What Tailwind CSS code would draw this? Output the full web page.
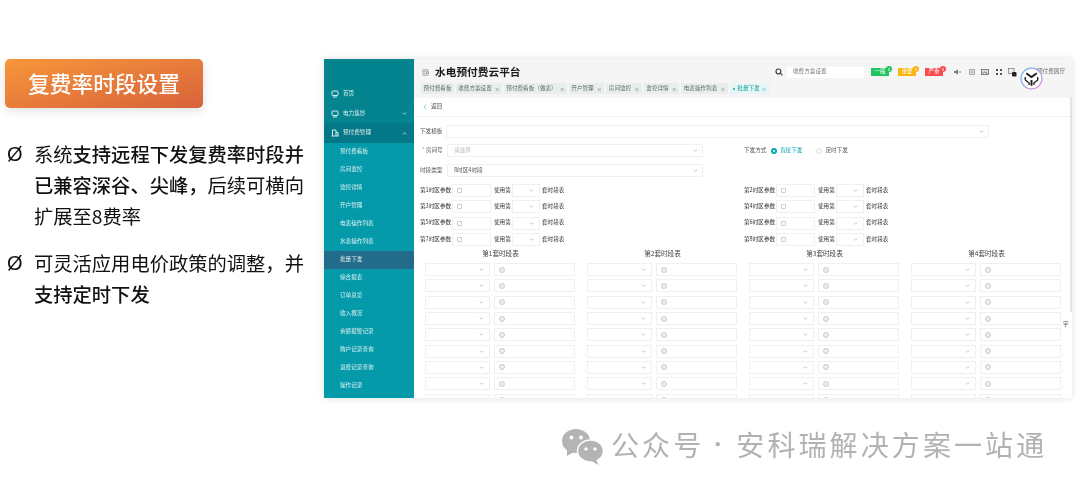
<!DOCTYPE html>
<html lang="zh-CN">
<head>
    <meta charset="UTF-8">
    <title>复费率时段设置</title>
    <script src="https://cdn.jsdelivr.net/npm/@tailwindcss/browser@4"></script>
</head>
<body class="bg-white">
<div class="w-[1080px] h-[489px] overflow-hidden flex flex-col bg-white font-['Noto_Sans_CJK_SC',sans-serif]">
    <div class="flex h-[421px] shrink-0">
        <!-- Left text -->
        <div class="w-[324px] shrink-0 pl-[5px] pt-[59px]">
            <div class="w-[198px] h-[49px] rounded-[5px] bg-gradient-to-br from-[#f7963a] to-[#d8623a] shadow-[0_3px_10px_rgba(0,0,0,0.12)] flex items-center justify-center text-white text-[21.7px] font-medium blur-[0.3px]">复费率时段设置</div>
            <div class="mt-[31px] flex text-[#111] text-[19.3px] leading-[31px] blur-[0.25px]">
                <span class="w-[29px] pl-[2px] shrink-0 text-[20px] font-['Liberation_Sans']">Ø</span>
                <p class="w-[275px]">系统<b class="font-medium">支持远程下发复费率时段并<br>已兼容深谷、尖峰，</b>后续可横向<br>扩展至8费率</p>
            </div>
            <div class="mt-[16px] flex text-[#111] text-[19.3px] leading-[31px] blur-[0.25px]">
                <span class="w-[29px] pl-[2px] shrink-0 text-[20px] font-['Liberation_Sans']">Ø</span>
                <p class="w-[275px]">可灵活应用电价政策的调整，并<br><b class="font-medium">支持定时下发</b></p>
            </div>
        </div>

        <!-- Screenshot card -->
        <div class="mt-[59px] w-[748px] h-[339px] relative flex shadow-[0_0_7px_rgba(0,0,0,0.13)] blur-[0.6px] text-[5.6px] text-[#555] leading-none">
            <aside class="w-[90px] shrink-0 bg-[#059aa9] text-white/85 overflow-hidden">
                <div class="h-[45px] bg-[#04848f] flex flex-col justify-end">
                    <div class="h-[20px] flex items-center pl-[7px] gap-[4px]">
                        <svg class="w-[8px] h-[8px]" viewBox="0 0 8 8" fill="none" stroke="#d8eef0"><rect x="1" y="1" width="6" height="4.5" rx="1"/><path d="M2 7h4"/></svg>首页
                    </div>
                </div>
                <div class="h-[19px] bg-[#04848f] flex items-center pl-[7px] gap-[4px]">
                    <svg class="w-[8px] h-[8px]" viewBox="0 0 8 8" fill="none" stroke="#d8eef0"><rect x="1" y="1" width="6" height="4.5" rx="1"/><path d="M2 7h4"/></svg>电力集抄
                    <svg class="ml-auto mr-[7px] w-[5px] h-[5px]" viewBox="0 0 6 6" fill="none" stroke="#bfe3e6"><path d="M1 2l2 2 2-2"/></svg>
                </div>
                <div class="h-[20px] bg-[#047886] flex items-center pl-[7px] gap-[4px]">
                    <svg class="w-[8px] h-[8px]" viewBox="0 0 8 8" fill="none" stroke="#d8eef0"><path d="M1.5 7V1h3.5v6M5 3.5h2V7M0.5 7h7"/></svg>预付费管理
                    <svg class="ml-auto mr-[7px] w-[5px] h-[5px]" viewBox="0 0 6 6" fill="none" stroke="#bfe3e6"><path d="M1 4l2-2 2 2"/></svg>
                </div>
                <div id="menu"></div>
            </aside>

            <main class="flex-1 min-w-0 bg-white flex flex-col overflow-hidden">
                <header class="h-[39px] shrink-0 bg-[#f5f5f5] px-[7px]">
                    <div class="h-[24px] flex items-center">
                        <svg class="w-[7px] h-[7px] ml-[1px] mr-[6px] mt-[2px]" viewBox="0 0 8 8" fill="none" stroke="#777" stroke-width="0.8"><path d="M0.5 1h7M0.5 3h3M0.5 5h3M0.5 7h7M5 3h2.5v2H5z"/></svg>
                        <span class="text-[10.7px] font-bold text-[#1a1a1a] mt-[2px]">水电预付费云平台</span>
                        <svg class="ml-auto w-[8px] h-[8px] mt-[2px] mr-[4px]" viewBox="0 0 8 8" fill="none" stroke="#444" stroke-width="1.2"><circle cx="3.4" cy="3.4" r="2.4"/><path d="M5.2 5.2L7.4 7.4"/></svg>
                        <div class="w-[77px] h-[11px] mt-[2px] bg-white flex items-center pl-[6px] text-[#777]">收费方案设置</div>
                        <div id="badges" class="flex ml-[7px] mt-[2px] gap-[9px]"></div>
                        <div class="flex items-center mt-[2px] ml-[10px] text-[#666]">
                            <svg class="w-[8px] h-[6px]" viewBox="0 0 8 6" fill="#777"><path d="M1 2h2l2-2v6L3 4H1zM6 2.5h2v1H6z"/></svg>
                            <svg class="w-[6px] h-[6px] ml-[8px]" viewBox="0 0 6 6" fill="none" stroke="#999" stroke-width="0.8"><rect x="0.5" y="0.5" width="5" height="5"/><path d="M3 1v4M1 3h4"/></svg>
                            <svg class="w-[8px] h-[6px] ml-[6px]" viewBox="0 0 8 6" fill="#ddd" stroke="#666" stroke-width="0.8"><rect x="0.5" y="0.5" width="7" height="5"/><path d="M1.5 4.5L3.5 3l3 1.5"/></svg>
                            <svg class="w-[6px] h-[6px] ml-[7px]" viewBox="0 0 6 6" fill="#555"><rect width="2" height="2"/><rect x="4" width="2" height="2"/><rect y="4" width="2" height="2"/><rect x="4" y="4" width="2" height="2"/></svg>
                            <svg class="w-[9px] h-[9px] ml-[6px]" viewBox="0 0 9 9"><rect x="0.5" y="0.5" width="5.5" height="5" fill="#eee" stroke="#777" stroke-width="0.7"/><rect x="4" y="4" width="4.5" height="4.5" rx="1" fill="#222"/></svg>
                            <svg class="w-[6px] h-[6px] ml-[7px]" viewBox="0 0 6 6" fill="none" stroke="#888" stroke-width="0.7"><path d="M1 3l2-2 2 2M2 3v2.5h2V3"/></svg>
                            <span class="ml-[7px] whitespace-nowrap">预付费展厅</span>
                        </div>
                    </div>
                    <div id="tabs" class="flex gap-[2px] h-[11px]"></div>
                </header>

                <div class="h-[19px] shrink-0 flex items-center pl-[9px] gap-[3px] border-b border-[#f2f2f2]">
                    <svg class="w-[4px] h-[6px]" viewBox="0 0 4 6" fill="none" stroke="#5bb8c0" stroke-width="0.7"><path d="M3 0.5L1 3l2 2.5"/></svg>
                    <span class="ml-[1px]">返回</span>
                </div>

                <div class="flex-1 pl-[6px] pt-[8px] overflow-hidden">
                    <div class="flex items-center h-[13px]">
                        <span class="w-[26px]">下发模板</span>
                        <div class="w-[543px] h-[13px] border border-[#f0f0f0] rounded-[1px] flex items-center justify-end pr-[4px]">
                            <svg class="w-[5px] h-[5px]" viewBox="0 0 6 6" fill="none" stroke="#bbb"><path d="M1 2l2 2 2-2"/></svg>
                        </div>
                    </div>
                    <div class="flex items-center h-[13px] mt-[6px]">
                        <span class="w-[27px] pl-[2px]"><span class="text-[#f56c6c]">*</span> 房间号</span>
                        <div class="w-[256px] h-[13px] border border-[#f0f0f0] rounded-[1px] flex items-center justify-between pl-[6px] pr-[4px] text-[#bbb]">请选择
                            <svg class="w-[5px] h-[5px]" viewBox="0 0 6 6" fill="none" stroke="#bbb"><path d="M1 2l2 2 2-2"/></svg>
                        </div>
                        <span class="ml-[41px] w-[27px]">下发方式</span>
                        <span class="w-[6px] h-[6px] rounded-full border-[2px] border-[#0aa5ae] bg-white"></span>
                        <span class="ml-[3px] text-[#0aa5ae]">直接下发</span>
                        <span class="ml-[14px] w-[6px] h-[6px] rounded-full border border-[#ddd]"></span>
                        <span class="ml-[3px]">定时下发</span>
                    </div>
                    <div class="flex items-center h-[13px] mt-[7px]">
                        <span class="w-[27px]">时段类型</span>
                        <div class="w-[256px] h-[13px] border border-[#f0f0f0] rounded-[1px] flex items-center justify-between pl-[6px] pr-[4px]">8时区4时段
                            <svg class="w-[5px] h-[5px]" viewBox="0 0 6 6" fill="none" stroke="#bbb"><path d="M1 2l2 2 2-2"/></svg>
                        </div>
                    </div>
                    <div id="params" class="grid grid-cols-[324px_1fr] gap-y-[3.4px] mt-[7px]"></div>
                    <div id="tables" class="grid grid-cols-[repeat(4,150px)] gap-x-[12px] ml-[5px] mt-[2px]"></div>
                </div>
            </main>

            <div class="absolute right-0 top-[38px] w-[2px] h-[215px] bg-[#e4e4e4]"></div>
            <span class="absolute left-[739px] top-[263px] text-[#555]">字</span>
            <!-- floating assistant logo -->
            <svg class="absolute left-[696px] top-[8px] w-[23px] h-[23px]" viewBox="0 0 24 24" fill="none">
                <defs><linearGradient id="ring" x1="0" y1="0" x2="1" y2="1"><stop offset="0" stop-color="#62b8ee"/><stop offset="0.55" stop-color="#a9a6ea"/><stop offset="1" stop-color="#f08fd0"/></linearGradient></defs>
                <circle cx="12" cy="12" r="10.9" fill="#fff" stroke="url(#ring)" stroke-width="1.3"/>
                <path d="M6.5 6.5l5.5 4 5.5-4M12 13.5v6" stroke="#1c1c1c" stroke-width="2"/>
                <path d="M5.5 10.5v3l4 3.2v2M18.5 10.5v3l-4 3.2v2" stroke="#1c1c1c" stroke-width="1.4"/>
            </svg>
        </div>
    </div>

    <!-- Watermark -->
    <div class="flex items-center pl-[562px] h-[50px] -mt-[2px] blur-[0.3px]">
        <svg class="w-[42px] h-[36px] shrink-0 mt-[5px]" viewBox="0 0 42 36" fill="#b4b4b4">
            <ellipse cx="14" cy="12" rx="14" ry="12"/>
            <path d="M5 20l0 7 7-4z"/>
            <ellipse cx="28.5" cy="22" rx="13" ry="11" stroke="#fff" stroke-width="1.5"/>
            <path d="M34 30l2.5 6-7-4z"/>
            <circle cx="9.5" cy="8.5" r="2" fill="#fff"/><circle cx="19" cy="8.5" r="2" fill="#fff"/>
            <circle cx="24" cy="20" r="1.7" fill="#fff"/><circle cx="33" cy="20" r="1.7" fill="#fff"/>
        </svg>
        <div class="ml-[7px] flex items-center text-[28px] text-[#b2b2b2] whitespace-nowrap leading-none">
            <span class="tracking-[3.1px]">公众号</span>
            <span class="w-[32px] pr-[5px] text-center text-[20px]">·</span>
            <span class="tracking-[3.1px]">安科瑞解决方案一站通</span>
        </div>
    </div>
</div>

<script>
    const chevron = '<svg class="w-[5px] h-[5px]" viewBox="0 0 6 6" fill="none" stroke="#bbb"><path d="M1 2l2 2 2-2"/></svg>';

    // sidebar sub menu
    const menuItems = ['预付费看板','房间监控','监控详情','开户管理','电表操作列表','水表操作列表','批量下发','综合报表','订单总览','收入概况','余额报警记录','购户记录查询','退费记录查询','操作记录'];
    document.getElementById('menu').innerHTML = menuItems.map(name => {
        const active = name === '批量下发' ? 'bg-[#236b8a]' : '';
        return `<div class="h-[18px] flex items-center pl-[16px] ${active}">${name}</div>`;
    }).join('');

    // alarm badges
    const badges = [['一般','bg-[#1fc35f]'],['重要','bg-[#fbb40f]'],['严重','bg-[#fb4b4f]']];
    document.getElementById('badges').innerHTML = badges.map(b => `
        <div class="relative w-[18px] h-[8px] ${b[1]} text-white flex items-center justify-center">${b[0]}
            <span class="absolute -top-[2px] -right-[3px] w-[6px] h-[6px] rounded-full ${b[1]} text-[4px] flex items-center justify-center">0</span>
        </div>`).join('');

    // open tabs
    const tabs = [['预付费看板',33,0],['收费方案设置',46,1],['预付费看板（做表）',63,1],['开户管理',35,1],['房间监控',36,1],['监控详情',35,1],['电表操作列表',47,1]];
    let tabsHtml = tabs.map(t => `
        <div class="h-[11px] bg-[#e9eeed] text-[#5a6e6c] flex items-center justify-center gap-[3px] shrink-0" style="width:${t[1]}px">${t[0]}${t[2] ? '<span class="text-[5px]">×</span>' : ''}</div>`).join('');
    tabsHtml += `<div class="h-[11px] w-[40px] bg-[#e6f6f5] text-[#1aa5a0] flex items-center justify-center gap-[2px] shrink-0"><span class="w-[2px] h-[2px] rounded-full bg-[#1aa5a0]"></span>批量下发<span class="text-[5px]">×</span></div>`;
    document.getElementById('tabs').innerHTML = tabsHtml;

    // zone params
    let params = '';
    for (let i = 1; i <= 8; i++) {
        params += `
        <div class="flex items-center h-[13px]">
            <span class="w-[32px] text-[#333] whitespace-nowrap">第${i}时区参数</span>
            <div class="w-[39px] h-[13px] border border-[#f0f0f0] flex items-center pl-[4px]"><span class="w-[5px] h-[5px] border border-[#ccc] rounded-[1px]"></span></div>
            <span class="ml-[3px] w-[18px] text-[#333]">使用第</span>
            <div class="w-[28px] h-[13px] border border-[#f0f0f0] flex items-center justify-end pr-[5px]">${chevron}</div>
            <span class="ml-[2px] text-[#333]">套时段表</span>
        </div>`;
    }
    document.getElementById('params').innerHTML = params;

    // time tables, cut off by the card bottom
    let tables = '';
    for (let t = 1; t <= 4; t++) {
        let rows = '';
        for (let r = 0; r < 9; r++) {
            rows += `
            <div class="flex gap-[4px] h-[13px] mb-[3.3px]">
                <div class="w-[65px] h-[13px] border border-[#f0f0f0] flex items-center justify-end pr-[5px] shrink-0">${chevron}</div>
                <div class="w-[81px] h-[13px] border border-[#f0f0f0] flex items-center pl-[4px] shrink-0"><span class="w-[6px] h-[6px] rounded-full border border-[#ccc] bg-[#eee]"></span></div>
            </div>`;
        }
        tables += `<div><div class="h-[11px] flex items-center justify-center text-[6.6px] text-[#444] mb-[4px] pl-[1px]">第${t}套时段表</div>${rows}</div>`;
    }
    document.getElementById('tables').innerHTML = tables;
</script>
</body>
</html>
